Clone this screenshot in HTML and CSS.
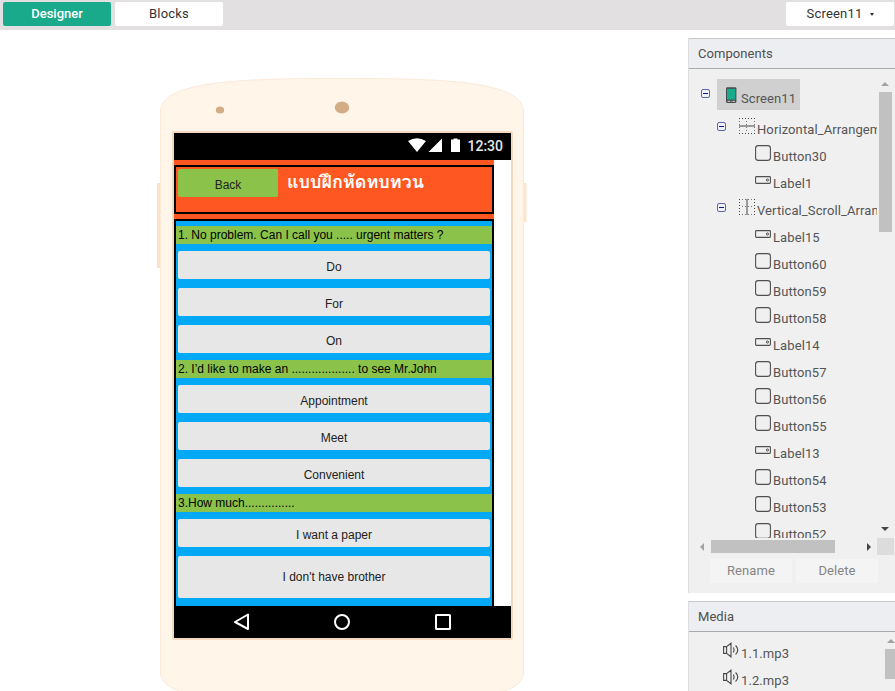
FILE: index.html
```html
<!DOCTYPE html>
<html lang="en">
<head>
<meta charset="utf-8">
<title>Designer</title>
<link rel="stylesheet" href="styles.css">
</head>
<body>
<svg class="defs" width="0" height="0">
  <symbol id="minus" viewBox="0 0 9 9"><rect x=".5" y=".5" width="8" height="8" rx="1.5" fill="#f0f1f8" stroke="#5c67a6"/><path d="M2 4.5h5" stroke="#101a80"/></symbol>
  <symbol id="button" viewBox="0 0 16 16"><rect x=".6" y=".6" width="14.8" height="14.8" rx="2.6" fill="none" stroke="#505050" stroke-width="1.1"/></symbol>
  <symbol id="label" viewBox="0 0 16 16"><rect x=".6" y="4.6" width="14.8" height="6.8" rx=".8" fill="none" stroke="#505050" stroke-width="1.1"/><circle cx="12.4" cy="8" r="1.1" fill="none" stroke="#505050"/></symbol>
  <symbol id="horizontal" viewBox="0 0 16 16"><path d="M0 .5h16M0 15.5h16" stroke="#444" stroke-dasharray="1 2"/><path d="M.5 3v12M15.500 3v12M7.500 3v12" stroke="#777" stroke-dasharray="1 2"/><path d="M0 8h16" stroke="#999" stroke-width="2"/></symbol>
  <symbol id="vertical" viewBox="0 0 16 16"><path d="M.5 0v16M15.500 0v16" stroke="#444" stroke-dasharray="1 2"/><path d="M3 .5h12M3 15.500h12M3 7.500h12" stroke="#777" stroke-dasharray="1 2"/><path d="M8 0v16" stroke="#999" stroke-width="2"/></symbol>
  <symbol id="phone" viewBox="0 0 16 16"><rect x="3" y=".2" width="10.400" height="15.800" rx="1.400" fill="#454b4a"/><rect x="4" y="1.800" width="8.400" height="10.800" fill="#19aa8b"/><path d="M4.500 14.300h2.500M9.500 14.300h2.500" stroke="#ddd"/><path d="M7.400 14.300h1.600" stroke="#999"/></symbol>
  <symbol id="sound" viewBox="0 0 16 16"><path d="M.6 4.600h3v6.800h-3zM3.600 4.600 8 1.200v13.600l-4.400-3.400M10.300 5.500q1.500 2.500 0 5M12.600 3.500q4.400 4.500 0 9" fill="none" stroke="#484848" stroke-width="1.100"/></symbol>
</svg>

<header class="topbar">
  <button class="tab active">Designer</button>
  <button class="tab">Blocks</button>
  <button class="tab picker">Screen11 <span class="caret"></span></button>
</header>

<div class="workspace">
  <main class="viewer">
    <div class="device">
      <svg class="shell" width="372" height="626" viewBox="0 0 372 626">
        <rect x="1" y="105" width="4" height="85" fill="#fbe2c8"/>
        <rect x="366" y="105" width="4.500" height="39" fill="#fde5d0"/>
        <path d="M4.500 34C4.500 2 90 .5 186 .5S367.500 2 367.500 34V594C367.500 623 290 625 186 625S4.500 623 4.500 594Z" fill="#fff5e9" stroke="#fbe9d9"/>
        <ellipse cx="64" cy="32" rx="4.200" ry="3.500" fill="#d3ad86"/>
        <ellipse cx="186" cy="29.500" rx="7.200" ry="6" fill="#d3ad86"/>
      </svg>
      <div class="screen">
        <div class="status">
          <svg width="53" height="15" viewBox="0 0 53 15" fill="#fff"><path d="M0 3Q9-2.500 18 3L9 14zM20.500 14 34 .5V14zM43 1.500h2.500V.5h4v1H52V14h-9z"/></svg>
          <span class="clock">12:30</span>
        </div>
        <div class="form">
          <div class="horizontal">
            <button class="back">Back</button>
            <h1 lang="th">แบบฝึกหัดทบทวน</h1>
          </div>
          <div class="scroll">
            <p>1. No problem. Can I call you ..... urgent matters ?</p>
            <button>Do</button>
            <button>For</button>
            <button>On</button>
            <p>2. I’d like to make an ................... to see Mr.John</p>
            <button>Appointment</button>
            <button>Meet</button>
            <button>Convenient</button>
            <p>3.How much...............</p>
            <button>I want a paper</button>
            <button class="tall">I don't have brother</button>
          </div>
        </div>
        <div class="nav">
          <svg width="337" height="32" viewBox="0 0 337 32" fill="none" stroke="#fff" stroke-width="2"><path d="M61 16 74 8.500v14.500z" stroke-linejoin="round"/><circle cx="168" cy="16" r="7"/><rect x="262" y="9" width="14" height="14" rx=".5"/></svg>
        </div>
      </div>
    </div>
  </main>

  <aside class="side">
    <section class="panel">
      <h2>Components</h2>
      <div class="treebox">
        <div class="tree">
          <div class="row root"><svg class="toggle"><use href="#minus"/></svg><span class="selected"><svg class="icon"><use href="#phone"/></svg><span>Screen11</span></span></div>
          <div class="row branch"><svg class="toggle"><use href="#minus"/></svg><svg class="icon"><use href="#horizontal"/></svg><span>Horizontal_Arrangement1</span></div>
          <div class="row leaf"><svg class="icon"><use href="#button"/></svg><span>Button30</span></div>
          <div class="row leaf"><svg class="icon"><use href="#label"/></svg><span>Label1</span></div>
          <div class="row branch"><svg class="toggle"><use href="#minus"/></svg><svg class="icon"><use href="#vertical"/></svg><span>Vertical_Scroll_Arrangement1</span></div>
          <div class="row leaf"><svg class="icon"><use href="#label"/></svg><span>Label15</span></div>
          <div class="row leaf"><svg class="icon"><use href="#button"/></svg><span>Button60</span></div>
          <div class="row leaf"><svg class="icon"><use href="#button"/></svg><span>Button59</span></div>
          <div class="row leaf"><svg class="icon"><use href="#button"/></svg><span>Button58</span></div>
          <div class="row leaf"><svg class="icon"><use href="#label"/></svg><span>Label14</span></div>
          <div class="row leaf"><svg class="icon"><use href="#button"/></svg><span>Button57</span></div>
          <div class="row leaf"><svg class="icon"><use href="#button"/></svg><span>Button56</span></div>
          <div class="row leaf"><svg class="icon"><use href="#button"/></svg><span>Button55</span></div>
          <div class="row leaf"><svg class="icon"><use href="#label"/></svg><span>Label13</span></div>
          <div class="row leaf"><svg class="icon"><use href="#button"/></svg><span>Button54</span></div>
          <div class="row leaf"><svg class="icon"><use href="#button"/></svg><span>Button53</span></div>
          <div class="row leaf"><svg class="icon"><use href="#button"/></svg><span>Button52</span></div>
        </div>
        <div class="vbar"><i class="up"></i><i class="thumb"></i><i class="down"></i></div>
        <div class="hbar"><i class="left"></i><i class="thumb"></i><i class="right"></i></div>
        <div class="corner"></div>
      </div>
      <div class="actions"><button>Rename</button><button>Delete</button></div>
    </section>
    <section class="panel media">
      <h2>Media</h2>
      <div class="files">
        <div>
          <div class="row"><svg class="icon"><use href="#sound"/></svg><span>1.1.mp3</span></div>
          <div class="row"><svg class="icon"><use href="#sound"/></svg><span>1.2.mp3</span></div>
        </div>
        <div class="mbar"><i class="up"></i><i class="thumb"></i></div>
      </div>
    </section>
  </aside>
</div>
</body>
</html>
```
FILE: styles.css
```css
* { box-sizing: border-box; }
html, body { height: 100%; }
body { margin: 0; overflow: hidden; background: #fff; font: 13px/16px Roboto, sans-serif; letter-spacing: .2px; color: #444; }
button { border: 0; padding: 0; margin: 0; font: inherit; letter-spacing: inherit; color: inherit; }
.defs { position: absolute; }

.topbar { display: flex; gap: 4px; height: 30px; padding: 2px 1px 4px 3px; background: #e2e0e0; }
.tab { width: 108px; height: 24px; border-radius: 2px; background: #fff; color: #333; }
.tab.active { background: #19aa8b; color: #fff; font-weight: 500; letter-spacing: 0; }
.picker { display: flex; align-items: center; justify-content: center; gap: 7px; margin-left: auto; }
.caret { border: 2.5px solid transparent; border-top: 3px solid #333; border-bottom: 0; }

.workspace { display: flex; height: 661px; }
.viewer { width: 688px; padding: 48px 0 0 156px; overflow: hidden; }
.device { position: relative; width: 372px; padding: 53px 0 0 16px; }
.shell { position: absolute; left: 0; top: 0; }
.screen { position: relative; width: 341px; height: 509px; border: 2px solid #f2d9bf; border-radius: 2px; background: #fff; font-family: "Liberation Sans", sans-serif; font-size: 12px; letter-spacing: 0; }
.status { display: flex; justify-content: flex-end; align-items: center; gap: 6px; height: 27px; padding: 0 8px 2px 0; background: #000; }
.clock { color: #e6e6e6; font: 500 14px/16px Roboto, sans-serif; }
.form { width: 320px; height: 446px; padding-top: 5px; background: #ff5722; overflow: hidden; }
.horizontal { display: flex; align-items: flex-start; height: 49px; padding: 2px; margin-bottom: 5px; border: 2px solid #000; }
.back { width: 100px; height: 28px; padding-top: 3px; border-radius: 2px; background: #8bc34a; color: #222; }
h1 { margin: 0 0 0 9px; font: bold 18px/25px Tahoma, Loma, "Noto Sans Thai Looped", Waree, Garuda, "Liberation Sans", sans-serif; color: #fff; white-space: nowrap; }
.scroll { display: flex; flex-direction: column; gap: 9px; height: 400px; padding-top: 5px; border: 2px solid #000; background: #03a9f4; color: #000; }
.scroll p { height: 18px; margin: -2px 0; padding-left: 2px; line-height: 18px; background: #8bc34a; }
.scroll p:first-child { margin-top: 0; }
.scroll button { height: 28px; flex: none; margin: 0 2px; padding-top: 3px; border-radius: 2px; background: #e7e7e7; color: #222; }
.scroll .tall { height: 42px; padding: 0; }
.nav { height: 32px; background: #000; }
.nav svg { display: block; }

.side { width: 207px; padding-top: 8px; }
.panel { height: 555px; border-left: 1px solid #ddd; background: #f0f0f0; overflow: hidden; }
.panel h2 { height: 31px; margin: 0; padding-left: 9px; border-top: 1px solid #c6c7c9; border-bottom: 1px solid #aaa; background: #eceef1; font-size: 13px; font-weight: 400; line-height: 29px; letter-spacing: .05px; color: #505050; }
.media { height: 120px; margin-top: 8px; }
.treebox { display: grid; grid-template: 469px 17px / 188px 17px; }
.tree { padding-top: 10px; overflow: hidden; }
.row { display: flex; height: 27px; gap: 2px; white-space: nowrap; line-height: 16px; letter-spacing: .1px; color: #555; }
.row > span { padding-top: 7px; }
.icon { flex: none; width: 16px; height: 16px; margin-top: 3px; }
.toggle { flex: none; width: 9px; height: 9px; }
.root { height: 36px; padding-left: 12px; gap: 7px; align-items: flex-start; }
.root .toggle { margin-top: 10px; }
.root .selected { display: flex; gap: 2px; width: 83px; height: 31px; padding: 5px 0 0 6px; background: #d0d0d0; }
.root .selected span { padding-top: 7px; }
.branch { padding-left: 28px; }
.branch .toggle { margin: 7px 11px 0 0; }
.leaf { padding-left: 66px; }
.vbar { display: flex; flex-direction: column; align-items: center; width: 17px; padding: 13px 1px 0 0; }
.vbar .thumb { width: 13px; height: 140px; margin-top: 6px; background: #c1c1c1; }
.up { border: 4px solid transparent; border-top: 0; border-bottom: 4px solid #a3a3a3; }
.down { margin-top: auto; margin-bottom: 7px; border: 4px solid transparent; border-bottom: 0; border-top: 4px solid #444; }
.hbar { display: flex; align-items: center; padding-left: 11px; }
.left { border: 4px solid transparent; border-left: 0; border-right: 4px solid #a3a3a3; }
.hbar .thumb { width: 124px; height: 13px; margin-left: 7px; background: #c1c1c1; }
.right { margin-left: 32px; border: 4px solid transparent; border-right: 0; border-left: 4px solid #444; }
.corner { width: 17px; background: #dcdcdc; }
.actions { display: flex; gap: 4px; padding: 4px 0 0 21px; }
.actions button { width: 82px; height: 24px; background: #f4f4f4; letter-spacing: .1px; color: #858585; }
.files { display: flex; justify-content: space-between; padding: 7px 0 0 34px; }
.mbar { display: flex; flex-direction: column; width: 10px; }
.mbar .up { width: 8px; margin-left: 2px; }
.mbar .thumb { width: 10px; height: 30px; margin-top: 6px; background: #c1c1c1; }
```
